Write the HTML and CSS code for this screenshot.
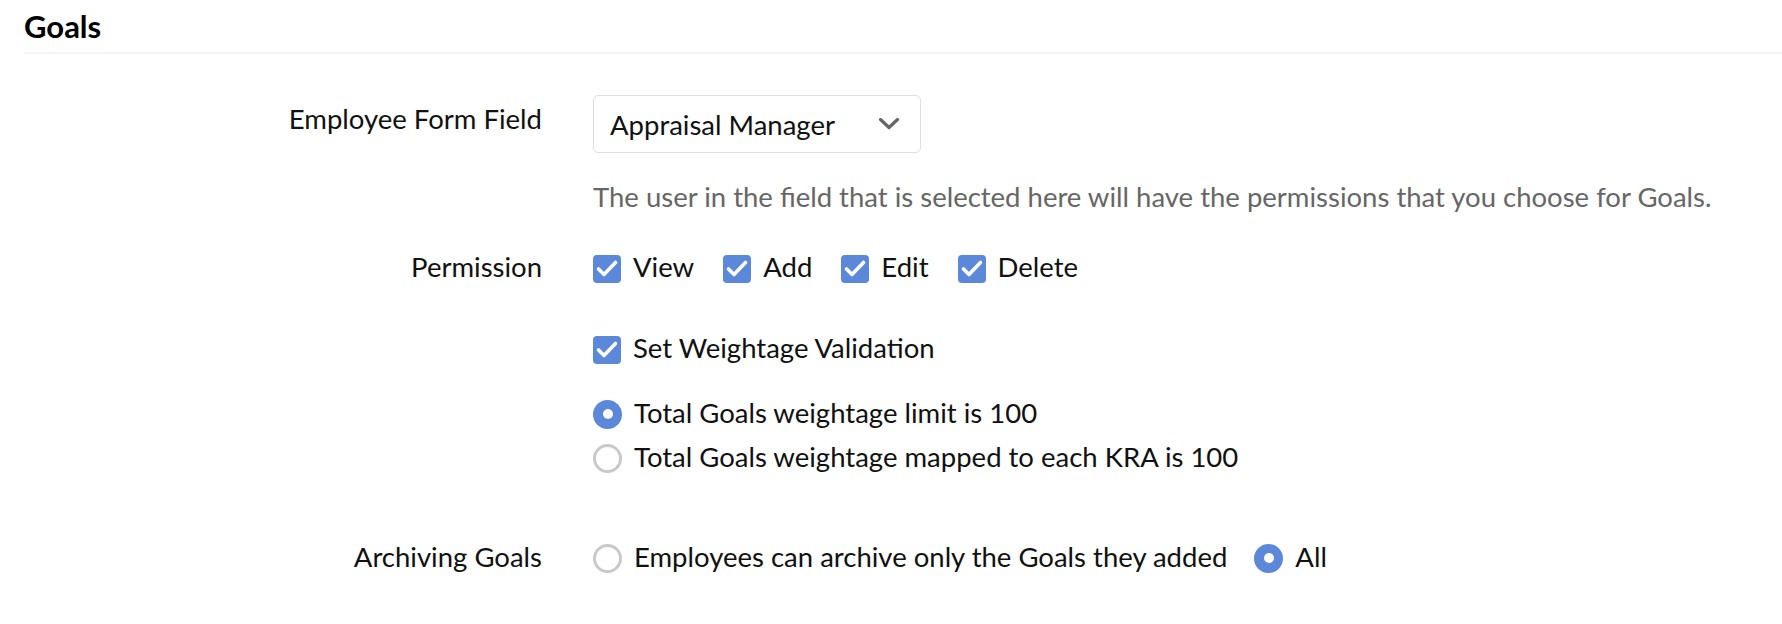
FILE: index.html
```html
<!DOCTYPE html>
<html lang="en">
<head>
<meta charset="utf-8">
<title>Goals</title>
<link rel="stylesheet" href="styles.css">
</head>
<body>
<header class="section-head">
  <h1 class="section-title">Goals</h1>
</header>
<div class="form">
  <div class="label label-select">Employee Form Field</div>
  <div class="control">
    <div class="select">
      <span class="select-value">Appraisal Manager</span>
      <svg class="chevron" width="22" height="12" viewBox="0 0 22 12"><path d="M2.5 1.5 L11 9.5 L19.5 1.5" fill="none" stroke="#666" stroke-width="3.2" stroke-linecap="round" stroke-linejoin="round"/></svg>
    </div>
    <p class="hint">The user in the field that is selected here will have the permissions that you choose for Goals.</p>
  </div>

  <div class="label label-perm">Permission</div>
  <div class="control control-perm">
    <div class="options">
      <label class="opt"><span class="check"><svg width="28" height="28" viewBox="0 0 28 28"><path d="M5.5 14 L11 19.5 L22.5 7.5" fill="none" stroke="#fff" stroke-width="3.6" stroke-linecap="round" stroke-linejoin="round"/></svg></span>View</label>
      <label class="opt"><span class="check"><svg width="28" height="28" viewBox="0 0 28 28"><path d="M5.5 14 L11 19.5 L22.5 7.5" fill="none" stroke="#fff" stroke-width="3.6" stroke-linecap="round" stroke-linejoin="round"/></svg></span>Add</label>
      <label class="opt"><span class="check"><svg width="28" height="28" viewBox="0 0 28 28"><path d="M5.5 14 L11 19.5 L22.5 7.5" fill="none" stroke="#fff" stroke-width="3.6" stroke-linecap="round" stroke-linejoin="round"/></svg></span>Edit</label>
      <label class="opt"><span class="check"><svg width="28" height="28" viewBox="0 0 28 28"><path d="M5.5 14 L11 19.5 L22.5 7.5" fill="none" stroke="#fff" stroke-width="3.6" stroke-linecap="round" stroke-linejoin="round"/></svg></span>Delete</label>
    </div>
    <div class="options weight">
      <label class="opt"><span class="check"><svg width="28" height="28" viewBox="0 0 28 28"><path d="M5.5 14 L11 19.5 L22.5 7.5" fill="none" stroke="#fff" stroke-width="3.6" stroke-linecap="round" stroke-linejoin="round"/></svg></span>Set Weightage Validation</label>
    </div>
    <div class="radio-list">
      <label class="opt"><span class="radio on"></span>Total Goals weightage limit is 100</label>
      <label class="opt"><span class="radio"></span>Total Goals weightage mapped to each KRA is 100</label>
    </div>
  </div>

  <div class="label label-archive">Archiving Goals</div>
  <div class="control control-archive">
    <div class="options archive">
      <label class="opt"><span class="radio"></span>Employees can archive only the Goals they added</label>
      <label class="opt"><span class="radio on"></span>All</label>
    </div>
  </div>
</div>
</body>
</html>
```

FILE: styles.css
```css
html, body {
  margin: 0;
  padding: 0;
  background: #fff;
}
body {
  font-family: Lato, "Open Sans", "Liberation Sans", sans-serif;
  color: #111;
  font-size: 27.5px;
  line-height: 34px;
}
.section-head {
  margin-left: 24px;
  padding-top: 8px;
  border-bottom: 2px solid #f3f3f3;
  height: 54px;
  box-sizing: border-box;
}
.section-title {
  margin: 0;
  font-size: 31px;
  font-weight: 700;
  line-height: 37px;
  color: #000;
}
.form {
  display: grid;
  grid-template-columns: 518px 1fr;
  column-gap: 51px;
  margin-left: 24px;
  padding-top: 41px;
}
.label {
  text-align: right;
  color: #111;
}
.label-select {
  padding-top: 7px;
}
.control {
  min-width: 0;
}
.select {
  display: flex;
  align-items: center;
  justify-content: space-between;
  width: 328px;
  height: 58px;
  box-sizing: border-box;
  border: 1px solid #dedede;
  border-radius: 5px;
  padding: 12px 20px 10px 16px;
}
.select-value {
  color: #111;
}
.chevron {
  display: block;
  margin-top: -2px;
}
.hint {
  margin: 27px 0 0;
  color: #666;
}
.label-perm, .control-perm {
  margin-top: 36px;
}
.options {
  display: flex;
  align-items: center;
  gap: 29px;
}
.weight {
  margin-top: 47px;
}
.opt {
  display: flex;
  align-items: center;
  gap: 12px;
  color: #111;
}
.check {
  width: 28px;
  height: 28px;
  border-radius: 4px;
  background: #5b88d8;
  display: block;
  flex: none;
  margin-top: 3px;
}
.check svg {
  display: block;
}
.radio-list {
  display: flex;
  flex-direction: column;
  gap: 10px;
  margin-top: 31px;
}
.radio {
  width: 29px;
  height: 29px;
  box-sizing: border-box;
  border-radius: 50%;
  border: 3px solid #c9c9c9;
  background: #fff;
  flex: none;
  position: relative;
  margin-top: 2px;
}
.radio.on {
  border: none;
  background: #5b88d8;
}
.radio.on::after {
  content: "";
  position: absolute;
  left: 50%;
  top: 50%;
  width: 10px;
  height: 10px;
  margin: -5px 0 0 -5px;
  border-radius: 50%;
  background: #fff;
}
.label-archive, .control-archive {
  margin-top: 66px;
}
.archive {
  gap: 27px;
}
```
